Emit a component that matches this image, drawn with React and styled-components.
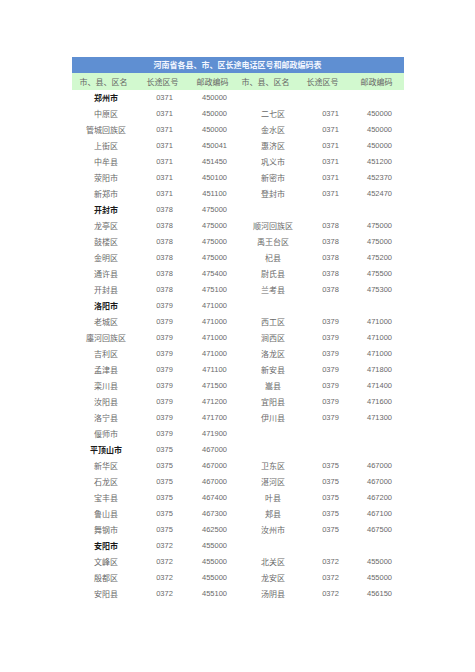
import React from 'react';
import styled, { createGlobalStyle } from 'styled-components';

const GlobalStyle = createGlobalStyle`
    body {
        margin: 0;
        background: #FFFFFF;
        font-family: "Noto Sans CJK SC", "Liberation Sans", sans-serif;
    }
`;

const Page = styled.div`
    width: 475px;
    height: 672px;
    padding-top: 57px;
    box-sizing: border-box;
`;

const Sheet = styled.table`
    width: 332px;
    margin: 0 auto;
    border-collapse: collapse;
    table-layout: fixed;
`;

const TitleCell = styled.th`
    height: 16px;
    padding: 0;
    background: #5f8fd2;
    color: #f4f7ff;
    font-size: 8px;
    font-weight: bold;
    text-align: center;
    line-height: 16px;
`;

const HeadCell = styled.th`
    height: 17px;
    padding: 0;
    background: #d2f9cf;
    color: #666666;
    font-size: 8px;
    font-weight: normal;
    text-align: center;
    line-height: 17px;
    white-space: nowrap;
`;

const Cell = styled.td`
    height: 16px;
    padding: 0 0 0 ${p => p.$shift || 0}px;
    color: ${p => (p.$city ? '#1a1a1a' : '#6a6a6a')};
    font-family: ${p => (p.$num ? '"Liberation Sans", Arial, sans-serif' : '"Noto Sans CJK SC", sans-serif')};
    font-size: ${p => (p.$num ? '7.5px' : '8px')};
    font-weight: ${p => (p.$city ? 'bold' : 'normal')};
    text-align: center;
    line-height: 16px;
    white-space: nowrap;
`;

const widths = [64, 54, 46, 60, 54, 54];
const heads = ['市、县、区名', '长途区号', '邮政编码', '市、县、区名', '长途区号', '邮政编码'];

// [左名称, 区号, 邮编, 右名称, 区号, 邮编]; city rows marked with *
const rows = [
    ['*郑州市', '0371', '450000'],
    ['中原区', '0371', '450000', '二七区', '0371', '450000'],
    ['管城回族区', '0371', '450000', '金水区', '0371', '450000'],
    ['上街区', '0371', '450041', '惠济区', '0371', '450000'],
    ['中牟县', '0371', '451450', '巩义市', '0371', '451200'],
    ['荥阳市', '0371', '450100', '新密市', '0371', '452370'],
    ['新郑市', '0371', '451100', '登封市', '0371', '452470'],
    ['*开封市', '0378', '475000'],
    ['龙亭区', '0378', '475000', '顺河回族区', '0378', '475000'],
    ['鼓楼区', '0378', '475000', '禹王台区', '0378', '475000'],
    ['金明区', '0378', '475000', '杞县', '0378', '475200'],
    ['通许县', '0378', '475400', '尉氏县', '0378', '475500'],
    ['开封县', '0378', '475100', '兰考县', '0378', '475300'],
    ['*洛阳市', '0379', '471000'],
    ['老城区', '0379', '471000', '西工区', '0379', '471000'],
    ['廛河回族区', '0379', '471000', '涧西区', '0379', '471000'],
    ['吉利区', '0379', '471000', '洛龙区', '0379', '471000'],
    ['孟津县', '0379', '471100', '新安县', '0379', '471800'],
    ['栾川县', '0379', '471500', '嵩县', '0379', '471400'],
    ['汝阳县', '0379', '471200', '宜阳县', '0379', '471600'],
    ['洛宁县', '0379', '471700', '伊川县', '0379', '471300'],
    ['偃师市', '0379', '471900'],
    ['*平顶山市', '0375', '467000'],
    ['新华区', '0375', '467000', '卫东区', '0375', '467000'],
    ['石龙区', '0375', '467000', '湛河区', '0375', '467000'],
    ['宝丰县', '0375', '467400', '叶县', '0375', '467200'],
    ['鲁山县', '0375', '467300', '郏县', '0375', '467100'],
    ['舞钢市', '0375', '462500', '汝州市', '0375', '467500'],
    ['*安阳市', '0372', '455000'],
    ['文峰区', '0372', '455000', '北关区', '0372', '455000'],
    ['殷都区', '0372', '455000', '龙安区', '0372', '455000'],
    ['安阳县', '0372', '455100', '汤阴县', '0372', '456150'],
];

const shifts = [5, 4, 4, 15, 16, 6];

const App = () => (
    <Page>
        <GlobalStyle />
        <Sheet>
            <colgroup>
                {widths.map((w, i) => <col key={i} style={{ width: w }} />)}
            </colgroup>
            <thead>
                <tr>
                    <TitleCell colSpan={6}>河南省各县、市、区长途电话区号和邮政编码表</TitleCell>
                </tr>
                <tr>
                    {heads.map((h, i) => <HeadCell key={i}>{h}</HeadCell>)}
                </tr>
            </thead>
            <tbody>
                {rows.map((r, i) => {
                    const cells = [...r, '', '', '', '', '', ''].slice(0, 6);
                    return (
                        <tr key={i}>
                            {cells.map((c, j) => {
                                const city = c.startsWith('*');
                                return (
                                    <Cell key={j} $city={city} $num={j % 3 !== 0} $shift={shifts[j]}>
                                        {city ? c.slice(1) : c}
                                    </Cell>
                                );
                            })}
                        </tr>
                    );
                })}
            </tbody>
        </Sheet>
    </Page>
);

export default App;
